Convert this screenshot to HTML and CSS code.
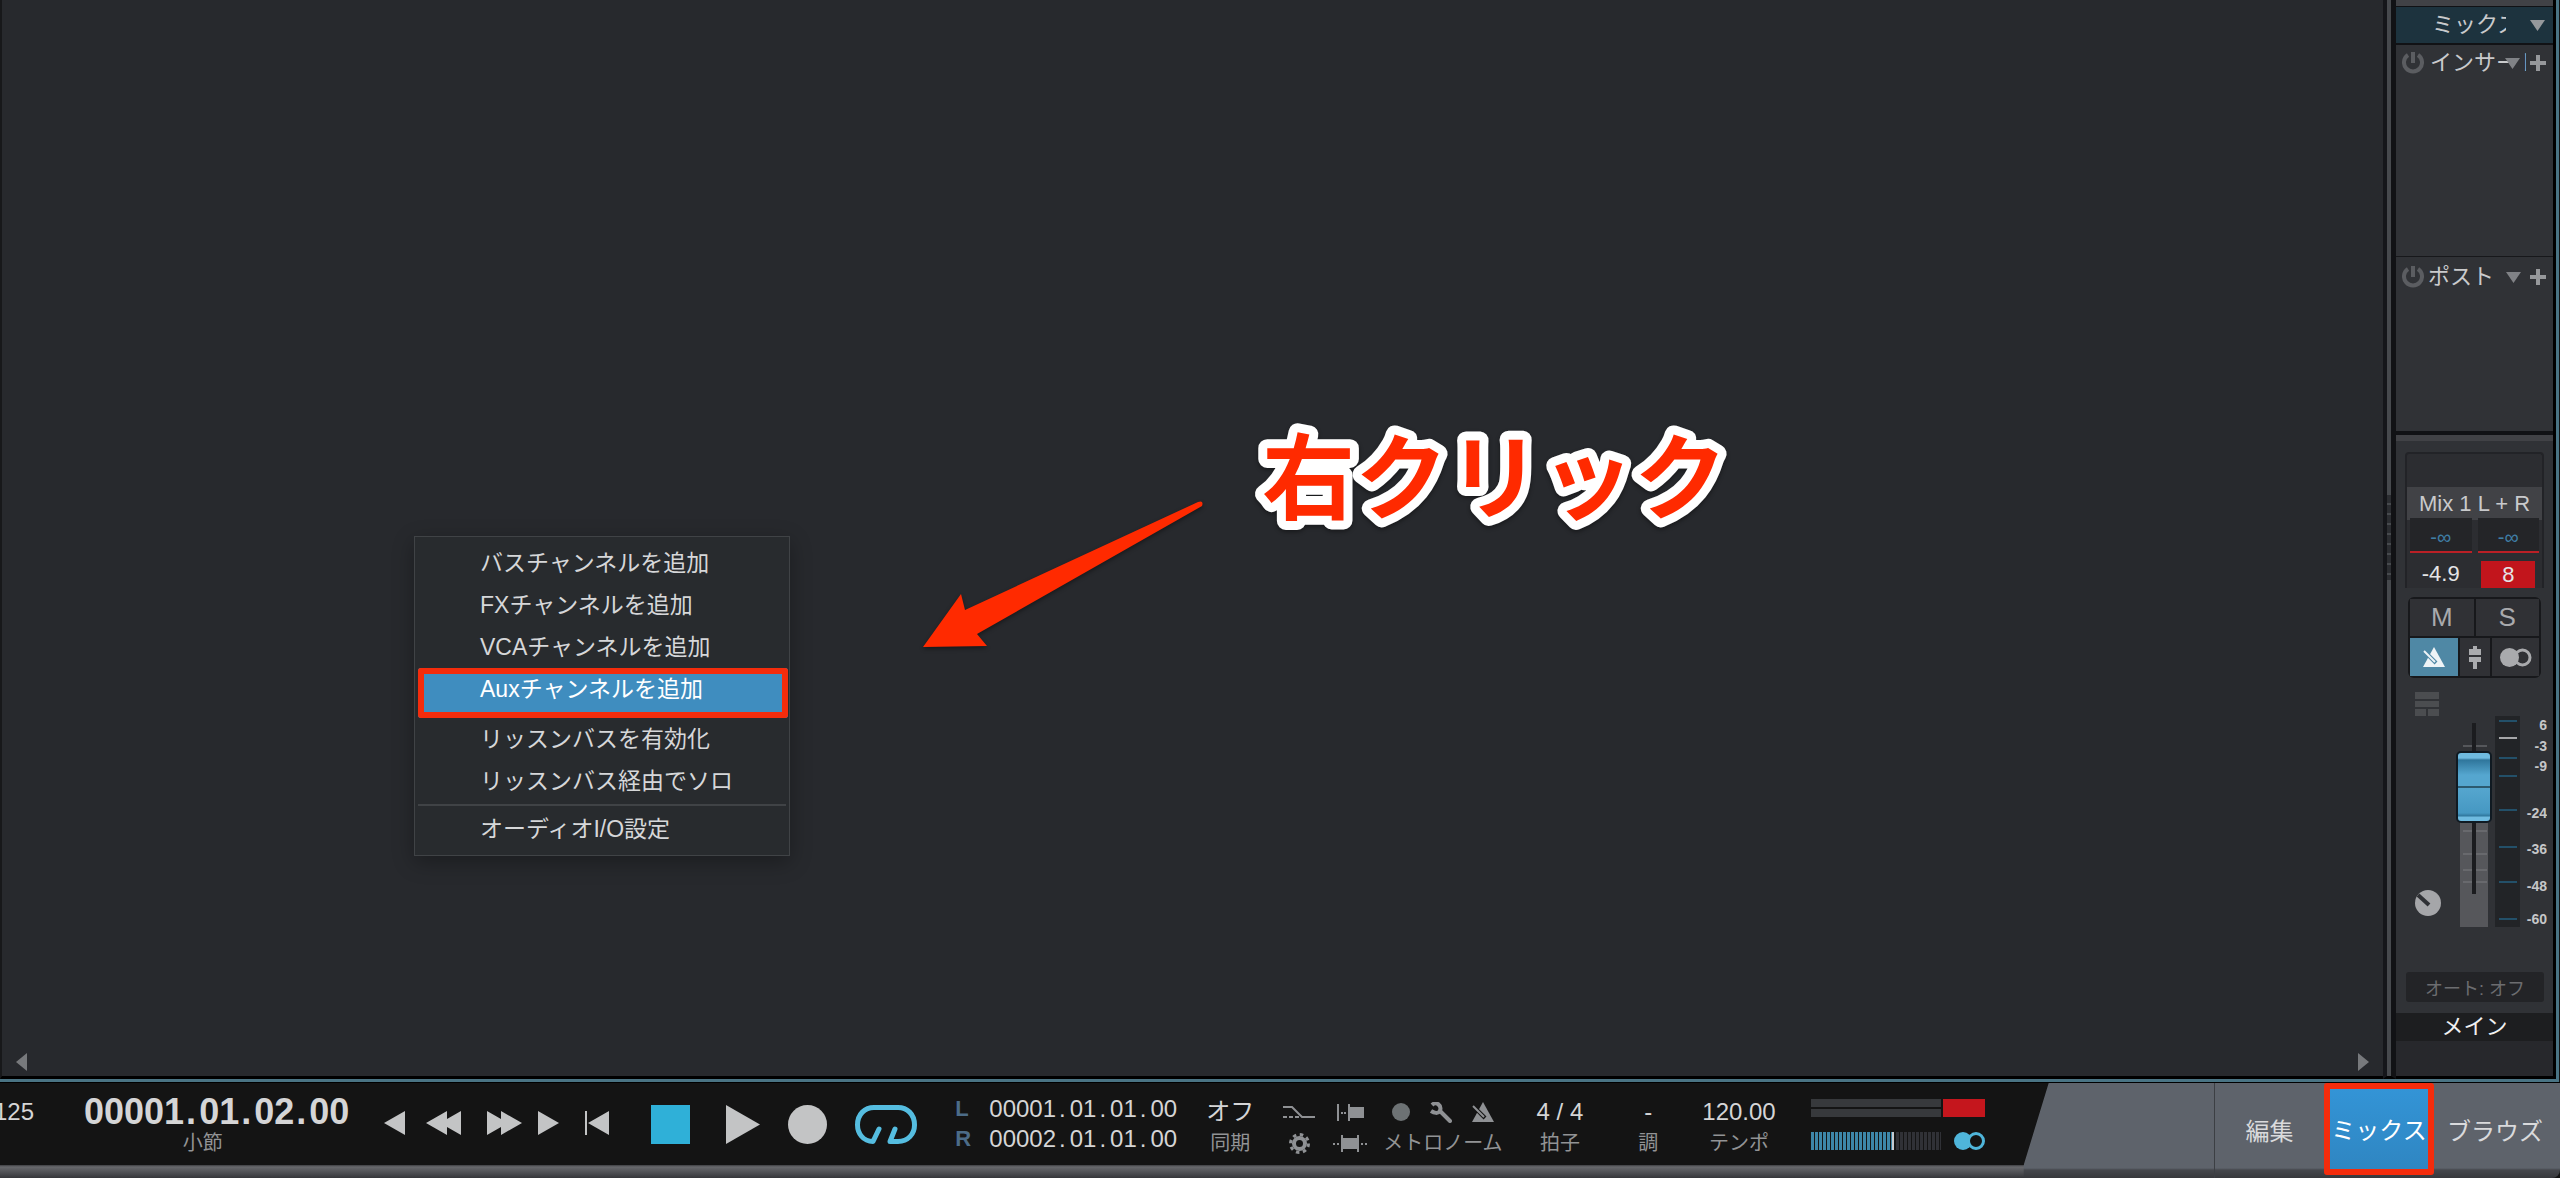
FILE: index.html
```html
<!DOCTYPE html>
<html lang="ja">
<head>
<meta charset="utf-8">
<title>ミックス</title>
<link rel="stylesheet" href="styles.css">
</head>
<body>
<div class="workspace">
  <main class="console">
    <div class="scrollbar">
      <button class="bare" aria-label="左へスクロール"><svg width="11" height="18"><path d="M11 0V18L0 9z" fill="#77797c"/></svg></button>
      <button class="bare" aria-label="右へスクロール"><svg width="11" height="18"><path d="M0 0V18L11 9z" fill="#77797c"/></svg></button>
    </div>

    <ul class="menu">
      <li><button class="menu-item">バスチャンネルを追加</button></li>
      <li><button class="menu-item">FXチャンネルを追加</button></li>
      <li><button class="menu-item">VCAチャンネルを追加</button></li>
      <li><button class="menu-item selected">Auxチャンネルを追加</button></li>
      <li><button class="menu-item">リッスンバスを有効化</button></li>
      <li><button class="menu-item">リッスンバス経由でソロ</button></li>
      <li class="menu-rule"><button class="menu-item">オーディオI/O設定</button></li>
    </ul>

    <svg class="arrow" width="290" height="156" viewBox="0 0 290 156">
      <path d="M2 149L40 96L44 112L277 4Q283 2 281 8L56 136L66 148z" fill="#ff2a00"/>
    </svg>
    <svg class="callout" width="500" height="130"><text x="20" y="92">右クリック</text></svg>
  </main>

  <div class="splitter"><span class="grip"></span></div>

  <aside class="strip">
    <div class="strip-cap"></div>
    <button class="mix-head">
      <span class="clip">ミックス</span>
      <svg width="15" height="11"><path d="M0 0H15L7.500 11z" fill="#95989b"/></svg>
    </button>
    <section class="slot inserts">
      <button class="bare power" aria-label="インサートのオン"><svg width="22" height="22" viewBox="0 0 22 22" fill="none" stroke="#5b5d61" stroke-width="4"><path d="M6 3A9 9 0 1 0 16 3M11 0V11"/></svg></button>
      <span class="slot-name">インサート</span>
      <button class="bare drop over" aria-label="インサートのメニュー"><svg width="15" height="11"><path d="M0 0H15L7.500 11z" fill="#808286"/></svg></button>
      <button class="bare add" aria-label="インサートを追加"><svg width="16" height="16"><path d="M6 0H10V6H16V10H10V16H6V10H0V6H6z" fill="#96989b"/></svg></button>
    </section>
    <section class="slot post">
      <button class="bare power" aria-label="ポストのオン"><svg width="22" height="22" viewBox="0 0 22 22" fill="none" stroke="#5b5d61" stroke-width="4"><path d="M6 3A9 9 0 1 0 16 3M11 0V11"/></svg></button>
      <span class="slot-name">ポスト</span>
      <button class="bare drop" aria-label="ポストのメニュー"><svg width="15" height="11"><path d="M0 0H15L7.500 11z" fill="#808286"/></svg></button>
      <button class="bare add" aria-label="ポストを追加"><svg width="16" height="16"><path d="M6 0H10V6H16V10H10V16H6V10H0V6H6z" fill="#96989b"/></svg></button>
    </section>

    <section class="channel">
      <div class="routing">
        <button class="output">Mix 1 L + R</button>
        <div class="levels">
          <span class="peak">-∞</span><span class="peak">-∞</span>
          <span class="gain">-4.9</span><span class="gain"><b class="clipped">8</b></span>
        </div>
      </div>
      <div class="switches">
        <div class="switch-row">
          <button class="switch">M</button><button class="switch">S</button>
        </div>
        <div class="switch-row lower">
          <button class="switch metro on" aria-label="メトロノーム"><svg width="22" height="20" viewBox="0 0 22 20"><path d="M11 0L22 20H0z" fill="#eef3f6"/><path d="M1 4L13 16" stroke="#4f88a5" stroke-width="4"/><path d="M1 4L12 15" stroke="#eef3f6" stroke-width="2"/></svg></button>
          <button class="switch link" aria-label="フェーダー"><svg width="12" height="23" viewBox="0 0 12 23"><path d="M4 0H8V3H12V9H0V3H4zM0 11H12V16H8V23H4V16H0z" fill="#aaabae"/></svg></button>
          <button class="switch mono" aria-label="モノラル"><svg width="32" height="19" viewBox="0 0 32 19"><circle cx="22.500" cy="9.500" r="7.500" fill="none" stroke="#a9aaad" stroke-width="3"/><circle cx="9.500" cy="9.500" r="9.500" fill="#a9aaad"/></svg></button>
        </div>
      </div>
      <div class="fader-area">
        <div class="fader-side">
          <svg width="24" height="24" fill="#4b4d50"><path d="M0 0H24V7H0zM0 9H24V15H0zM0 17H11V24H0zM13 17H24V24H13z"/></svg>
          <svg width="26" height="26"><circle cx="13" cy="13" r="13" fill="#a5a6a9"/><path d="M3 5L14 15" stroke="#2f3135" stroke-width="4"/></svg>
        </div>
        <div class="fader-track">
          <svg width="36" height="211">
            <path d="M4 60H32V211H4z" fill="#56575b"/>
            <path d="M7 30H31M7 115H31M7 138H31M7 154H31M7 166H31" stroke="#7b7c80" stroke-width="1"/>
            <path d="M16 7H20V178H16z" fill="#1b1c1f"/>
          </svg>
          <input class="fader" type="range" min="0" max="100" value="79" aria-label="音量">
        </div>
        <svg class="scale" width="52" height="217" viewBox="0 0 52 217">
          <path d="M0 0H25V211H0z" fill="#222427"/>
          <path d="M4 5H22M4 42H22M4 60H22M4 94H22M4 131H22M4 166H22M4 203H22" stroke="#235069" stroke-width="2"/>
          <path d="M4 22H22" stroke="#a5a6a8" stroke-width="2"/>
          <g class="scale-text" text-anchor="end">
            <text x="52" y="14">6</text><text x="52" y="35">-3</text><text x="52" y="55">-9</text><text x="52" y="102">-24</text><text x="52" y="138">-36</text><text x="52" y="175">-48</text><text x="52" y="208">-60</text>
          </g>
        </svg>
      </div>
      <button class="auto">オート: オフ</button>
    </section>
    <div class="strip-name">メイン</div>
  </aside>
</div>

<footer class="transport">
  <div class="deck">
    <div class="panel">
      <div class="group remain"><span class="value">125</span></div>
      <div class="group position">
        <span class="value big">00001<i>.</i>01<i>.</i>02<i>.</i>00</span>
        <span class="label">小節</span>
      </div>
      <div class="jog">
        <div class="jog-set">
          <button class="bare" aria-label="前へ"><svg width="21" height="24"><path d="M21 0V24L0 12z"/></svg></button>
          <button class="bare" aria-label="巻き戻し"><svg width="35" height="24"><path d="M21 0V8L35 0V24L21 16V24L0 12z"/></svg></button>
        </div>
        <div class="jog-set forward">
          <button class="bare" aria-label="早送り"><svg width="35" height="24"><path d="M14 0V8L0 0V24L14 16V24L35 12z"/></svg></button>
          <button class="bare" aria-label="次へ"><svg width="21" height="24"><path d="M0 0V24L21 12z"/></svg></button>
        </div>
        <button class="bare" aria-label="先頭へ"><svg width="24" height="24"><path d="M0 0H2V24H0zM24 0V24L3 12z"/></svg></button>
      </div>
      <div class="keys">
        <button class="bare stop" aria-label="停止"><svg width="39" height="39"><path d="M0 0H39V39H0z" fill="#2fb0d8"/></svg></button>
        <button class="bare" aria-label="再生"><svg width="34" height="39"><path d="M0 0V39L34 19.500z"/></svg></button>
        <button class="bare" aria-label="録音"><svg width="39" height="39"><circle cx="19.500" cy="19.500" r="19.500"/></svg></button>
        <button class="bare" aria-label="ループ"><svg width="62" height="39" viewBox="0 0 62 39"><path d="M24 24L18 36.500C8 36.500 2.500 28 2.500 20C2.500 9 10 2.500 19 2.500H43C52 2.500 59.500 9 59.500 20C59.500 29 53 36.500 43 36.500H35L40 24" style="fill:none" stroke="#55bde0" stroke-width="5" stroke-linejoin="round" stroke-linecap="round"/></svg></button>
      </div>
      <div class="locators">
        <b>L</b><span class="value">00001<i>.</i>01<i>.</i>01<i>.</i>00</span>
        <b>R</b><span class="value">00002<i>.</i>01<i>.</i>01<i>.</i>00</span>
      </div>
      <div class="group sync"><button class="bare value">オフ</button><span class="label">同期</span></div>
      <div class="group auto-punch">
        <button class="bare" aria-label="プリロール"><svg width="32" height="12" fill="none" stroke="#8f9194" stroke-width="2"><path d="M0 1H9L19 11H32"/><path d="M0 11H16" stroke-dasharray="4 2"/></svg></button>
        <button class="bare" aria-label="設定"><svg width="21" height="21" viewBox="0 0 21 21" fill="none" stroke="#8f9194"><circle cx="10.500" cy="10.500" r="5.500" stroke-width="4"/><circle cx="10.500" cy="10.500" r="9" stroke-width="3" stroke-dasharray="3.500 3.569"/></svg></button>
      </div>
      <div class="group punch">
        <button class="bare" aria-label="パンチイン"><svg width="27" height="17"><path d="M0 0H2V17H0zM4 8H6V10H4zM7 8H9V10H7zM11 0H13V3H27V14H13V17H11z" fill="#8f9194"/></svg></button>
        <button class="bare" aria-label="パンチアウト"><svg width="34" height="17"><path d="M0 8H2V10H0zM4 8H6V10H4zM8 0H10V3H24V0H26V17H24V14H10V17H8zM28 8H30V10H28zM32 8H34V10H32z" fill="#8f9194"/></svg></button>
      </div>
      <div class="group click">
        <div class="click-icons">
          <button class="bare" aria-label="プリカウント"><svg width="18" height="18"><circle cx="9" cy="9" r="9" fill="#6d7274"/></svg></button>
          <button class="bare" aria-label="メトロノーム設定"><svg width="22" height="21" viewBox="0 0 22 21" fill="none" stroke="#8f9194"><path d="M2 3C6 -1 12 3 10 9C8 12 4 11 1 9" stroke-width="4"/><path d="M10 9L20 19" stroke-width="4" stroke-linecap="round"/></svg></button>
          <button class="bare" aria-label="メトロノーム"><svg width="22" height="20" viewBox="0 0 22 20"><path d="M11 0L22 20H0z" fill="#8f9194"/><path d="M1 4L13 16" stroke="#141414" stroke-width="4"/><path d="M1 4L12 15" stroke="#8f9194" stroke-width="2"/></svg></button>
        </div>
        <span class="label">メトロノーム</span>
      </div>
      <div class="group meter-sig"><span class="value">4 / 4</span><span class="label">拍子</span></div>
      <div class="group key-sig"><span class="value">-</span><span class="label">調</span></div>
      <div class="group tempo"><span class="value">120.00</span><span class="label">テンポ</span></div>
      <svg class="output-meter" width="174" height="51">
        <path d="M0 0H130V8H0zM0 10H130V18H0z" fill="#37393c"/>
        <path d="M132 0H174V18H132z" fill="#c5161d"/>
        <path d="M0 42H82" stroke="#3d86a8" stroke-width="18" stroke-dasharray="3 1"/>
        <path d="M81 33H83V51H81z" fill="#c7cbd0"/>
        <path d="M85 42H130" stroke="#303136" stroke-width="18" stroke-dasharray="3 1"/>
        <circle cx="152" cy="42" r="9" fill="#4fb5da"/><circle cx="165" cy="42" r="7.500" fill="#141414" stroke="#4fb5da" stroke-width="3"/>
      </svg>
    </div>
  </div>
  <nav class="tabs">
    <button class="tab">編集</button>
    <button class="tab active">ミックス</button>
    <button class="tab wide">ブラウズ</button>
  </nav>
</footer>
</body>
</html>
```
FILE: styles.css
```css
* { box-sizing: border-box; }

body {
  margin: 0;
  height: 100vh;
  display: flex;
  flex-direction: column;
  overflow: hidden;
  background: #141414;
  color: #c9cacc;
  font-family: "Liberation Sans", "Noto Sans CJK JP", sans-serif;
  font-size: 22px;
}

button {
  font: inherit;
  color: inherit;
  border: 0;
  padding: 0;
  margin: 0;
  background: none;
}

.bare { display: flex; align-items: center; justify-content: center; }
svg { display: block; flex: none; }

.workspace {
  flex: 1;
  min-height: 0;
  display: flex;
  border-right: 3px solid #4a7484;
  border-bottom: 3px solid #4a7484;
  margin-right: 1px;
}

.console {
  flex: 1;
  position: relative;
  display: flex;
  flex-direction: column;
  justify-content: flex-end;
  background: #27292d;
  border-left: 2px solid #17181a;
  border-bottom: 3px solid #000;
}

.scrollbar {
  display: flex;
  justify-content: space-between;
  padding: 5px 14px;
}

/* context menu */
.menu {
  position: absolute;
  left: 412px;
  top: 536px;
  width: 376px;
  margin: 0;
  padding: 5px 0;
  list-style: none;
  background: #282b2e;
  border: 1px solid #404346;
  box-shadow: 0 6px 20px rgba(0, 0, 0, 0.3);
  font-size: 23px;
  color: #d6d7d9;
}

.menu-item {
  display: block;
  width: 100%;
  height: 42px;
  line-height: 42px;
  padding-left: 65px;
  text-align: left;
  white-space: nowrap;
}

.menu-item.selected {
  width: 370px;
  height: 50px;
  margin-left: 3px;
  padding: 0 0 8px 62px;
  background: #3f8dbf;
  color: #fff;
  border-radius: 3px;
  box-shadow: inset 0 0 0 6px #f42c0c;
}

.menu-rule { margin: 2px 3px 0; border-top: 2px solid #404346; padding-top: 2px; }
.menu-rule .menu-item { padding-left: 62px; }

/* annotation */
.arrow { position: absolute; left: 919px; top: 498px; filter: drop-shadow(0 2px 2px rgba(0, 0, 0, 0.4)); }

.callout {
  position: absolute;
  left: 1240px;
  top: 420px;
  font-family: "Noto Sans CJK JP", sans-serif;
  font-size: 93px;
  font-weight: 700;
  fill: #ff2a00;
  stroke: #fff;
  stroke-width: 18px;
  stroke-linejoin: round;
  paint-order: stroke fill;
  filter: drop-shadow(0 2px 2px rgba(0, 0, 0, 0.4));
}

.splitter {
  width: 13px;
  background: #46494d;
  border-left: 4px solid #15161a;
  border-right: 5px solid #111215;
  border-bottom: 3px solid #000;
}

.grip {
  display: block;
  height: 85px;
  margin-top: 495px;
  background: repeating-linear-gradient(#2b2d31 0 8px, #46494d 8px 10px);
}

/* channel strip */
.strip {
  width: 160px;
  display: flex;
  flex-direction: column;
  background: #27282c;
  border-right: 3px solid #000;
  border-bottom: 3px solid #000;
}

.strip-cap { height: 7px; background: #414246; border-bottom: 1px solid #111215; }

.mix-head {
  height: 38px;
  display: flex;
  align-items: center;
  justify-content: space-between;
  padding: 0 8px 0 36px;
  background: #1d333e;
  border-bottom: 2px solid #111215;
}

.clip { width: 74px; line-height: 34px; overflow: hidden; white-space: nowrap; text-align: left; }

.slot {
  display: flex;
  align-items: flex-start;
  padding: 6px 7px 0 6px;
  background: #303236;
}

.power { height: 24px; }
.slot-name { width: 96px; margin: -2px 0 0 6px; line-height: 28px; overflow: hidden; white-space: nowrap; }
.drop { height: 24px; margin-left: auto; }
.drop.over { margin-left: -21px; }
.add { height: 24px; margin-left: 9px; }
.over + .add { margin-left: auto; }
.inserts { height: 212px; border-bottom: 1px solid #17181b; }
.post { height: 178px; padding-top: 8px; border-bottom: 4px solid #111215; }
.post .slot-name { width: auto; margin-left: 4px; }

.channel {
  flex: none;
  height: 578px;
  display: flex;
  flex-direction: column;
  padding: 11px 9px 0;
  background: #303236;
  border-top: 6px solid #414246;
}

.routing {
  height: 136px;
  padding-top: 33px;
  border: 2px solid #222327;
  border-bottom: 0;
  border-radius: 4px 4px 0 0;
  background: #2c2d31;
}

.output {
  display: block;
  width: 100%;
  height: 33px;
  background: #414246;
  white-space: nowrap;
}

.levels {
  display: grid;
  grid-template-columns: 1fr 1fr;
  grid-template-rows: 33px 35px;
}

.peak {
  margin: 0 3px;
  text-align: center;
  line-height: 34px;
  font-size: 20px;
  color: #3f7ea6;
  border-bottom: 2px solid #bb2026;
}

.levels .peak { background: #242528; box-shadow: 0 -2px 0 #242528; }
.gain { display: flex; align-items: center; justify-content: center; margin-top: 7px; color: #e4e4e6; }
.clipped { width: 54px; line-height: 27px; background: #c2151c; text-align: center; font-weight: 400; }

.switches {
  margin: 9px 3px 0;
  border: 2px solid #17181b;
  border-radius: 6px;
  background: #17181b;
}

.switch-row { display: flex; gap: 2px; }
.switch-row.lower { margin-top: 2px; }
.switch {
  flex: 1;
  height: 37px;
  display: flex;
  align-items: center;
  justify-content: center;
  background: #303135;
  color: #a9aaad;
  font-size: 26px;
}
.lower .switch { height: 38px; }
.switch.metro { flex: none; width: 48px; }
.switch.link { flex: none; width: 30px; }
.switch.on { background: #4f88a5; }

.fader-area { display: flex; margin: 38px -3px 0 0; height: 217px; }
.fader-side { flex: none; width: 51px; height: 224px; margin-top: -24px; padding-left: 10px; display: flex; flex-direction: column; justify-content: space-between; }
.fader-track { flex: none; width: 36px; display: grid; }
.fader-track > * { grid-area: 1 / 1; }

.fader {
  appearance: none;
  writing-mode: vertical-lr;
  direction: rtl;
  width: 36px;
  height: 204px;
  margin: 7px 0 0;
  background: none;
}

.fader::-webkit-slider-thumb {
  appearance: none;
  width: 36px;
  height: 72px;
  border: 2px solid #101a22;
  border-radius: 5px;
  background: linear-gradient(#6fbbe0 0 5px, #2f769c 7px, #55a6cf 22px, #55a6cf 33px, #2c5a70 33px 35px, #55a6cf 35px, #4698c2 60px, #2f769c 63px, #6fbbe0 64px);
}

.scale { margin-left: 3px; }
.scale-text { font-size: 14px; font-weight: 700; fill: #c5c6c8; }

.auto {
  height: 30px;
  margin: 39px 0 0 1px;
  background: #232427;
  border-radius: 3px;
  font-size: 18px;
  color: #6c6d70;
}

.strip-name {
  height: 28px;
  line-height: 28px;
  text-align: center;
  background: #1d1e20;
  color: #f0f0f1;
}

/* transport */
.transport {
  flex: none;
  height: 96px;
  display: flex;
  justify-content: space-between;
  border-top: 1px solid #000;
  background: linear-gradient(#5e636b 0 85px, #45474c 87px, #37383c);
  border-bottom-right-radius: 8px;
}

.deck {
  flex: none;
  background: linear-gradient(#5e636b 0 81px, #28292c 81px, #68696d 84px, #35363a);
  clip-path: polygon(0 0, 100% 0, calc(100% - 25px) 82px, calc(100% - 25px) 100%, 0 100%);
}

.panel {
  height: 82px;
  display: flex;
  padding-right: 64px;
  background: #141414;
}

.group {
  display: grid;
  grid-template-rows: 32px 30px;
  justify-items: center;
  align-items: center;
  align-content: start;
  padding-top: 13px;
  white-space: nowrap;
}

.value { font-size: 24px; line-height: 30px; color: #d5d5d6; white-space: nowrap; }
.value i { font-style: normal; margin: 0 4px 0 3px; }
.value.big { font-size: 36px; font-weight: 700; }
.value.big i { margin: 0 3px 0 2px; }
.label { font-size: 20px; line-height: 30px; color: #929395; }

.remain { width: 34px; overflow: hidden; justify-items: end; justify-content: end; }
.position { margin-left: 50px; }
.position .label { margin-right: 28px; }

.jog { display: flex; gap: 26px; margin: 28px 0 0 35px; height: 24px; fill: #c3c4c5; }
.jog-set { display: flex; gap: 21px; }
.jog-set.forward { gap: 16px; }

.keys { display: flex; gap: 28px; margin: 22px 0 0 42px; height: 39px; fill: #c3c4c5; }
.stop { width: 47px; justify-content: flex-start; }

.locators {
  display: grid;
  grid-template-columns: 34px auto;
  grid-template-rows: 30px 30px;
  align-content: start;
  align-items: center;
  padding-top: 11px;
  margin-left: 38px;
}
.locators b { color: #4c6c88; }

.sync { margin-left: 29px; }
.auto-punch { margin-left: 29px; }
.punch { margin-left: 18px; }
.click { margin-left: 16px; }
.click-icons { display: flex; gap: 20px; align-items: center; }
.meter-sig { margin-left: 34px; }
.key-sig { margin-left: 55px; }
.tempo { margin-left: 44px; }
.output-meter { margin: 16px 0 0 35px; }

.tabs { display: flex; margin-right: 4px; border-left: 1px solid #3c3f44; }
.tab {
  width: 109px;
  padding-bottom: 2px;
  font-size: 24px;
  color: #d9dadc;
  white-space: nowrap;
}
.tab.active {
  width: 110px;
  height: 92px;
  border: 6px solid #f42c0c;
  border-radius: 3px;
  background: linear-gradient(#3394d6, #2f86c2);
  color: #fff;
}
.tab.wide { width: 122px; }
```
